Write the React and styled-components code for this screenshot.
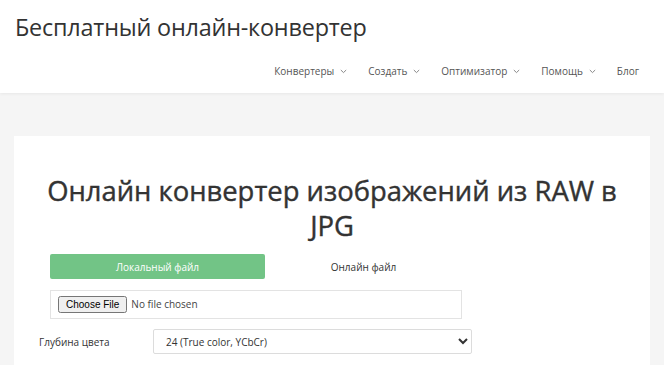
import React from "react";
import styled, { createGlobalStyle } from "styled-components";

const GlobalStyle = createGlobalStyle`
  html, body { margin: 0; padding: 0; }
  body {
    background: #f5f5f5;
    font-family: "Open Sans", "Noto Sans", sans-serif;
    color: #333;
  }
  * { box-sizing: border-box; }
`;

const Header = styled.header`
  background: #fff;
  height: 93px;
  padding: 10px 25px 0 15px;
  box-shadow: 0 1px 3px rgba(0, 0, 0, 0.06);
  display: flex;
  flex-direction: column;
`;

const SiteTitle = styled.div`
  font-size: 23.4px;
  line-height: 34px;
  color: #333;
  letter-spacing: -0.2px;
`;

const Nav = styled.nav`
  margin-top: 20px;
  display: flex;
  justify-content: flex-end;
  align-items: center;
  gap: 21px;
`;

const NavItem = styled.a`
  display: flex;
  align-items: center;
  gap: 6px;
  font-size: 10px;
  color: #555;
  text-decoration: none;
`;

const Chevron = () => (
  <svg width="7" height="5" viewBox="0 0 7 5" fill="none">
    <path d="M0.8 1 L3.5 3.6 L6.2 1" stroke="#888" strokeWidth="1" />
  </svg>
);

const Main = styled.main`
  padding: 43px 14px 0;
`;

const Card = styled.section`
  background: #fff;
  padding: 37px 0 20px;
  min-height: 240px;
`;

const Heading = styled.h1`
  margin: 0 auto;
  max-width: 600px;
  font-size: 27.4px;
  line-height: 35px;
  font-weight: 400;
  -webkit-text-stroke: 0.4px #333;
  text-align: center;
  color: #333;
`;

const Form = styled.div`
  margin: 11px 0 0 36px;
  width: 412px;
`;

const Tabs = styled.div`
  display: flex;
  height: 25px;
`;

const Tab = styled.div`
  flex: 0 0 ${(p) => p.$w}px;
  display: flex;
  align-items: center;
  justify-content: center;
  font-size: 10px;
  border-radius: 2px;
  background: ${(p) => (p.$active ? "#72c486" : "transparent")};
  color: ${(p) => (p.$active ? "#fff" : "#333")};
`;

const FileBox = styled.div`
  margin-top: 11px;
  height: 29px;
  border: 1px solid #e3e3e3;
  display: flex;
  align-items: center;
  padding: 0 7px;
`;

const FileInput = styled.input`
  font-family: "Open Sans", "Noto Sans", sans-serif;
  font-size: 10px;
  color: #444;
`;

const Row = styled.div`
  margin: 10px 0 0 -11px;
  display: flex;
  align-items: center;
`;

const Label = styled.label`
  flex: 0 0 114px;
  font-size: 10px;
  color: #333;
`;

const Select = styled.select`
  flex: 0 0 319px;
  height: 25px;
  border: 1px solid #dcdcdc;
  border-radius: 2px;
  background: #fff;
  padding: 0 8px;
  font-family: "Open Sans", "Noto Sans", sans-serif;
  font-size: 10px;
  color: #333;
`;

export default function App() {
  return (
    <>
      <GlobalStyle />
      <Header>
        <SiteTitle>Бесплатный онлайн-конвертер</SiteTitle>
        <Nav>
          <NavItem>Конвертеры <Chevron /></NavItem>
          <NavItem>Создать <Chevron /></NavItem>
          <NavItem>Оптимизатор <Chevron /></NavItem>
          <NavItem>Помощь <Chevron /></NavItem>
          <NavItem>Блог</NavItem>
        </Nav>
      </Header>
      <Main>
        <Card>
          <Heading>Онлайн конвертер изображений из RAW в JPG</Heading>
          <Form>
            <Tabs>
              <Tab $w={215} $active>Локальный файл</Tab>
              <Tab $w={197}>Онлайн файл</Tab>
            </Tabs>
            <FileBox>
              <FileInput type="file" />
            </FileBox>
            <Row>
              <Label>Глубина цвета</Label>
              <Select defaultValue="24">
                <option value="24">24 (True color, YCbCr)</option>
              </Select>
            </Row>
          </Form>
        </Card>
      </Main>
    </>
  );
}
